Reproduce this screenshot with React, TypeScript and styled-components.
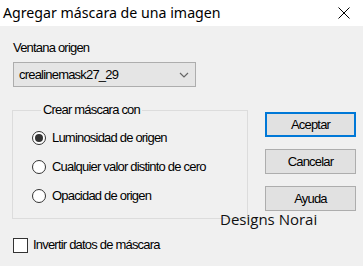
import styled, { createGlobalStyle } from "styled-components";

const GlobalStyle = createGlobalStyle`
  html, body {
    margin: 0;
    padding: 0;
    width: 363px;
    height: 266px;
    overflow: hidden;
    background: #f0f0f0;
  }
`;

const Window = styled.div`
  width: 363px;
  height: 266px;
  display: flex;
  flex-direction: column;
  background: #f0f0f0;
  font-family: "Liberation Sans", Arial, sans-serif;
  font-size: 13px;
  letter-spacing: -0.8px;
  line-height: 16px;
  color: #000;
`;

const TitleBar = styled.div`
  height: 26px;
  flex-shrink: 0;
  background: #fff;
  display: flex;
  align-items: center;
  justify-content: space-between;
  padding: 0 13px 0 3px;
  font-family: "Noto Sans", sans-serif;
  font-size: 14.2px;
  letter-spacing: 0;
  color: #000;
`;

const Body = styled.div`
  flex: 1;
  position: relative;
  display: grid;
  grid-template-columns: 236px 91px;
  column-gap: 17px;
  padding: 14px 0 0 12px;
`;

const Left = styled.div`
  display: flex;
  flex-direction: column;
`;

const Label = styled.div`
  height: 16px;
  padding-left: 1px;
`;

const Combo = styled.div`
  margin: 6px 0 0 1px;
  width: 183px;
  height: 25px;
  box-sizing: border-box;
  border: 1px solid #adadad;
  background: #e5e5e5;
  display: flex;
  align-items: center;
  justify-content: space-between;
  padding: 0 6px 0 5px;
`;

const Group = styled.fieldset`
  margin: 15px 0 0 0;
  padding: 10px 0 0 19px;
  width: 236px;
  height: 117px;
  box-sizing: border-box;
  border: 1px solid #dcdcdc;
  display: flex;
  flex-direction: column;
  gap: 9px;
`;

const Legend = styled.legend`
  padding: 0 2px;
  margin-left: 9px;
`;

const Option = styled.div`
  display: flex;
  align-items: center;
  gap: 6px;
  height: 20px;
`;

const Radio = styled.span<{ $checked?: boolean }>`
  width: 14px;
  height: 14px;
  box-sizing: border-box;
  border-radius: 50%;
  border: 1px solid #333;
  background: #fff;
  display: flex;
  align-items: center;
  justify-content: center;
  &::after {
    content: "";
    width: 8px;
    height: 8px;
    border-radius: 50%;
    background: ${(p) => (p.$checked ? "#333" : "transparent")};
  }
`;

const Check = styled.div`
  margin: 16px 0 0 1px;
  height: 20px;
  display: flex;
  align-items: center;
  gap: 5px;
`;

const Box = styled.span`
  width: 15px;
  height: 15px;
  box-sizing: border-box;
  border: 1px solid #333;
  background: #fff;
`;

const Buttons = styled.div`
  display: flex;
  flex-direction: column;
  gap: 12px;
  padding-top: 72px;
`;

const Button = styled.div<{ $default?: boolean }>`
  height: 25px;
  box-sizing: border-box;
  border: ${(p) => (p.$default ? "2px solid #0078d7" : "1px solid #adadad")};
  background: #e1e1e1;
  display: flex;
  align-items: center;
  justify-content: center;
`;

const Watermark = styled.div`
  position: absolute;
  left: 220px;
  top: 183px;
  font-family: "Open Sans", sans-serif;
  font-size: 15px;
  letter-spacing: 0;
  line-height: 20px;
  color: #111;
`;

const Chevron = () => (
  <svg width="10" height="6" viewBox="0 0 10 6">
    <path d="M1 1 L5 5 L9 1" fill="none" stroke="#666" strokeWidth="1.2" />
  </svg>
);

const Close = () => (
  <svg width="12" height="12" viewBox="0 0 12 12">
    <path d="M0.5 0.5 L11.5 11.5 M11.5 0.5 L0.5 11.5" stroke="#000" strokeWidth="1" />
  </svg>
);

export default function App() {
  return (
    <Window>
      <GlobalStyle />
      <TitleBar>
        <span>Agregar máscara de una imagen</span>
        <Close />
      </TitleBar>
      <Body>
        <Left>
          <Label>Ventana origen</Label>
          <Combo>
            <span>crealinemask27_29</span>
            <Chevron />
          </Combo>
          <Group>
            <Legend>Crear máscara con</Legend>
            <Option>
              <Radio $checked />
              <span>Luminosidad de origen</span>
            </Option>
            <Option>
              <Radio />
              <span>Cualquier valor distinto de cero</span>
            </Option>
            <Option>
              <Radio />
              <span>Opacidad de origen</span>
            </Option>
          </Group>
          <Check>
            <Box />
            <span>Invertir datos de máscara</span>
          </Check>
        </Left>
        <Buttons>
          <Button $default>Aceptar</Button>
          <Button>Cancelar</Button>
          <Button>Ayuda</Button>
        </Buttons>
        <Watermark>Designs Norai</Watermark>
      </Body>
    </Window>
  );
}
